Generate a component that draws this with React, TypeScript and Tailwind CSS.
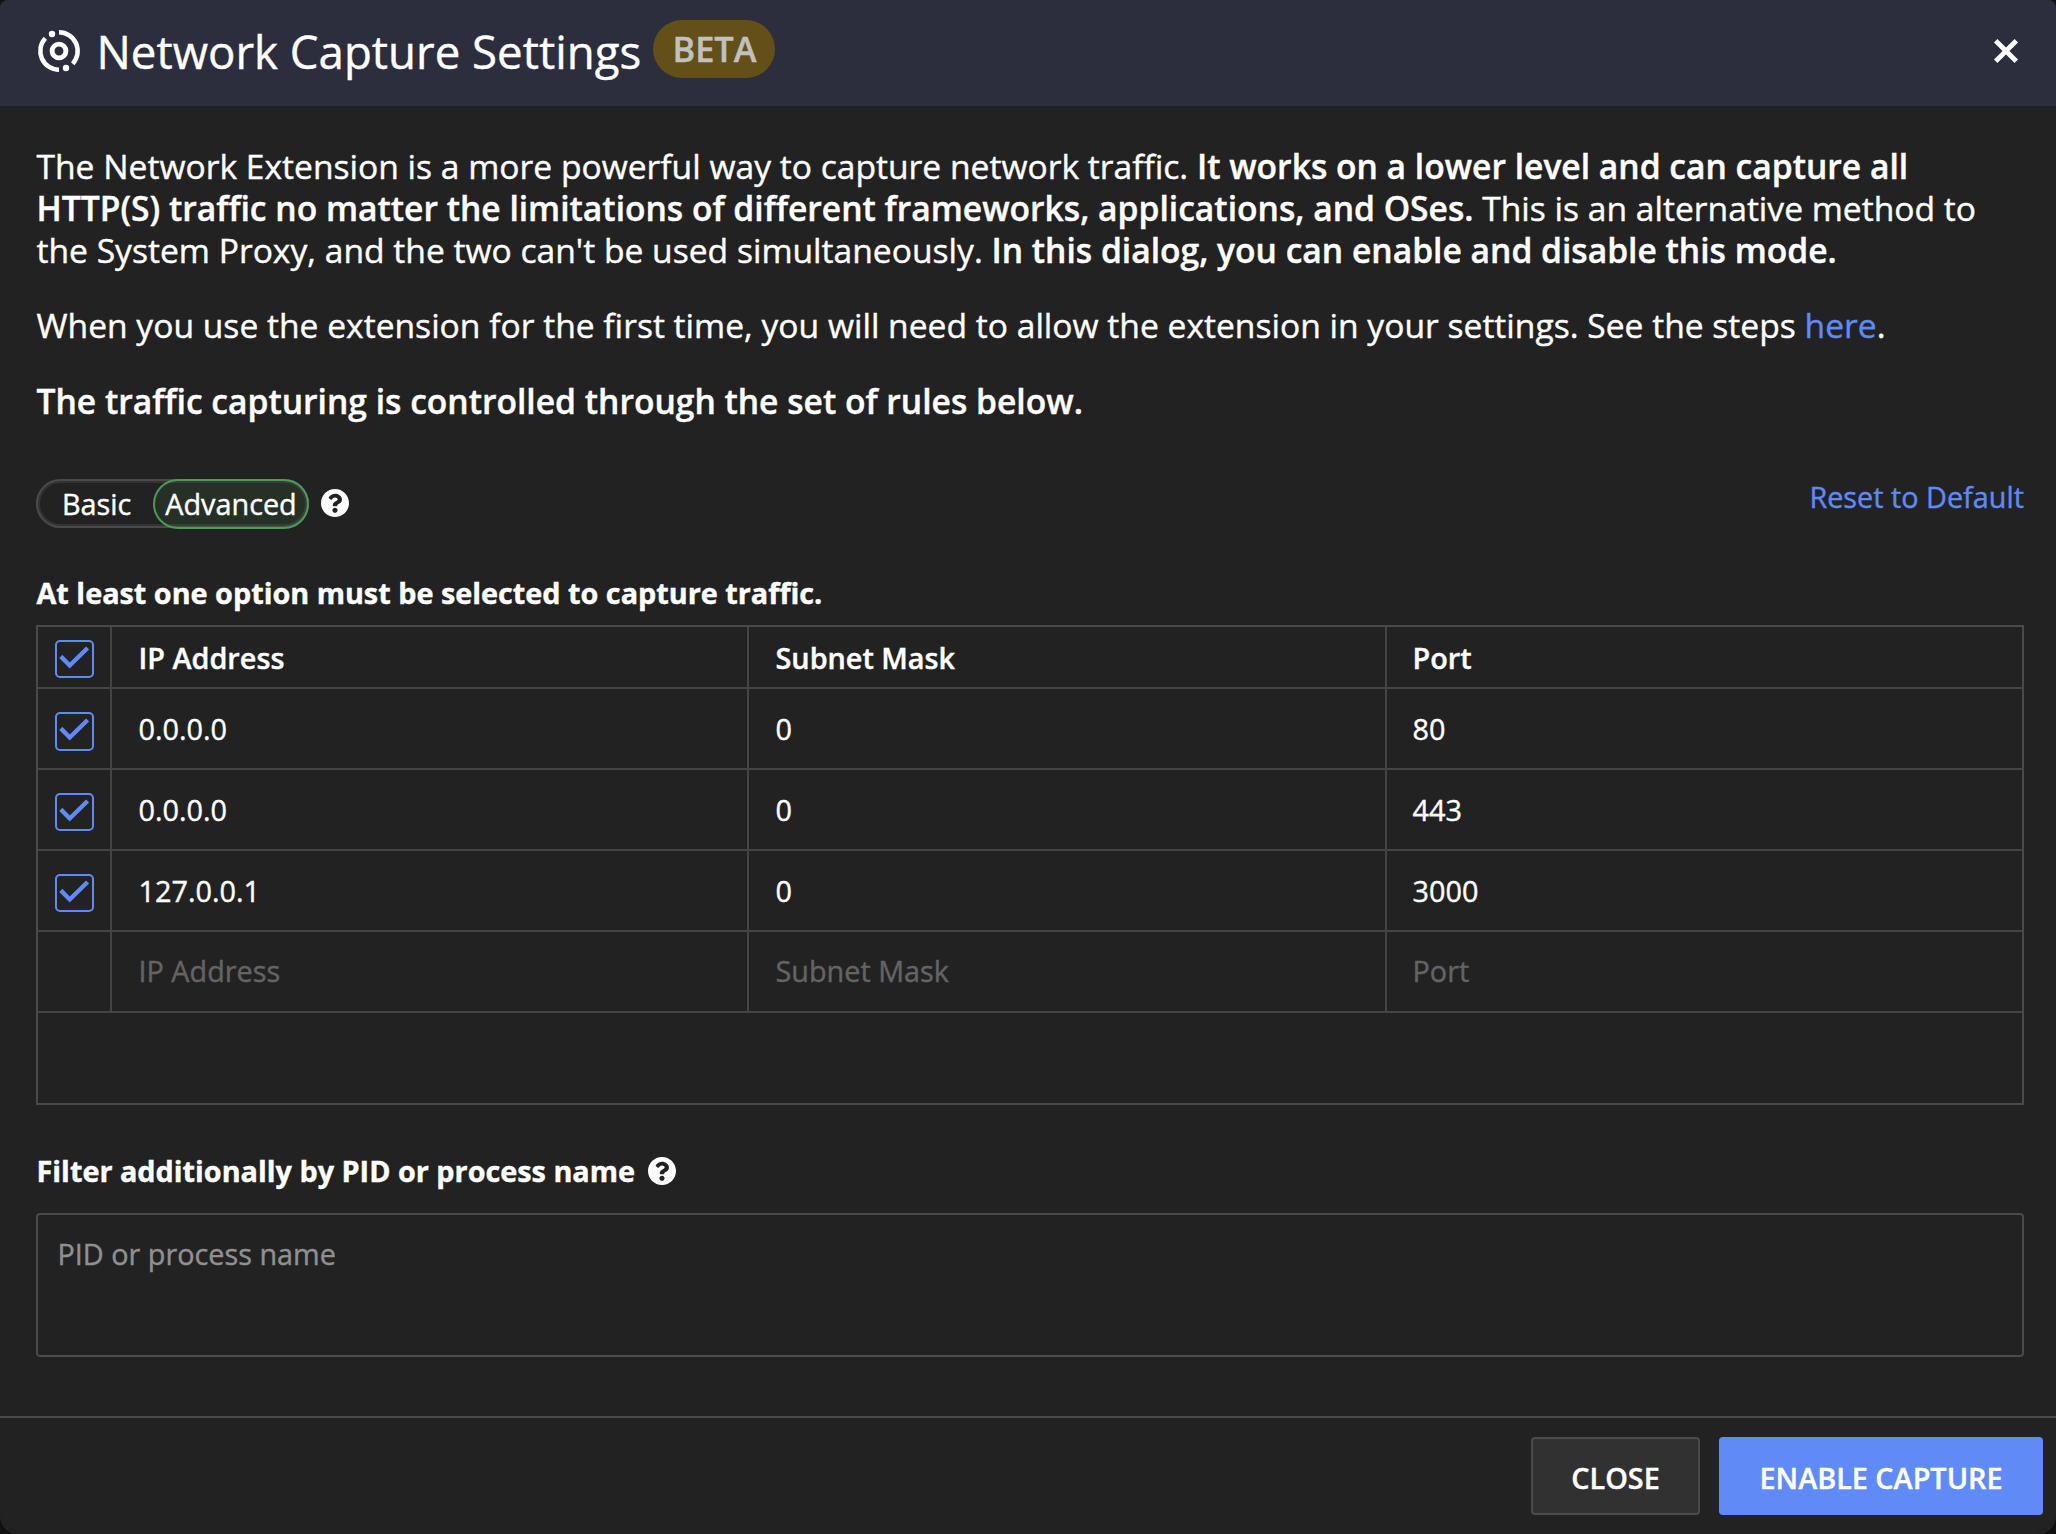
import React from "react";

const rules = [
  ["0.0.0.0", "0", "80"],
  ["0.0.0.0", "0", "443"],
  ["127.0.0.1", "0", "3000"],
];

function CaptureIcon() {
  return (
    <svg className="h-[44px] w-[44px] shrink-0" viewBox="-22 -22 44 44" fill="none" stroke="#fff" strokeWidth="4.5">
      <circle r="6.9" strokeWidth="4.9" />
      <path d="M0 -18.7A18.7 18.7 0 0 1 13.7 12.7" />
      <path d="M0 18.7A18.7 18.7 0 0 1 -13.7 -12.7" />
      <circle cx="-7" cy="-17" r="3.2" fill="#fff" stroke="none" />
      <circle cx="7" cy="17" r="3.2" fill="#fff" stroke="none" />
    </svg>
  );
}

function CloseIcon() {
  return (
    <svg className="h-[28px] w-[28px]" viewBox="-14 -14 28 28" stroke="#fff" strokeWidth="4.8">
      <path d="M-10.3 -10.3L10.3 10.3M10.3 -10.3L-10.3 10.3" />
    </svg>
  );
}

function HelpIcon() {
  return (
    <svg className="h-[28px] w-[28px] shrink-0" viewBox="8 8 496 496" fill="#fff">
      <path d="M504 256c0 136.997-111.043 248-248 248S8 392.997 8 256C8 119.083 119.043 8 256 8s248 111.083 248 248zM262.655 90c-54.497 0-89.255 22.957-116.549 63.758-3.536 5.286-2.353 12.415 2.715 16.258l34.699 26.31c5.205 3.947 12.621 3.008 16.665-2.122 17.864-22.658 30.113-35.797 57.303-35.797 20.429 0 45.698 13.148 45.698 32.958 0 14.976-12.363 22.667-32.534 33.976C247.128 238.528 216 254.941 216 296v4c0 6.627 5.373 12 12 12h56c6.627 0 12-5.373 12-12v-1.333c0-28.462 83.186-29.647 83.186-106.667 0-58.002-60.165-102-116.531-102zM256 338c-25.365 0-46 20.635-46 46 0 25.364 20.635 46 46 46s46-20.636 46-46c0-25.365-20.635-46-46-46z" />
    </svg>
  );
}

function Checkbox({ className }: { className: string }) {
  return (
    <span className={`block w-[39px] rounded-[5px] border-2 border-[#5f8af7] ${className}`}>
      <svg className="block h-[35px] w-[35px]" viewBox="2 2 35 35" fill="none" stroke="#5f8af7" strokeWidth="4.4">
        <path d="M5.8 16.4L14.7 25.5L32.6 8" />
      </svg>
    </span>
  );
}

const grid = "grid grid-cols-[74px_637px_638px_635px] border-b-2 border-[#444]";
const checkCell = "border-r-2 border-[#444] pl-[17px]";
const cell = "flex items-center border-r-2 border-[#444] pl-[26.5px]";
const lastCell = "flex items-center pl-[25.5px]";

export default function App() {
  return (
    <div className="h-[1534px] w-[2056px] bg-[#111]">
      <div className="flex h-full flex-col overflow-hidden rounded-t-[8px] rounded-b-[18px] bg-[#222] text-[28.8px] leading-[40px] text-white [-webkit-text-stroke:0.4px] [font-family:'Open_Sans',sans-serif]">
        <header className="flex h-[106px] shrink-0 items-center bg-[#2c2e3d] pr-[36px] pb-[4px] pl-[37px]">
          <CaptureIcon />
          <h1 className="ml-[15.5px] w-[546px] text-[45.6px] leading-[62px] whitespace-nowrap">Network Capture Settings</h1>
          <span className="-mt-[4px] ml-[10.5px] flex h-[58px] w-[122px] items-center justify-center rounded-full bg-[#635019] pl-px text-[34.4px] font-semibold text-[#c1c1c1]">
            BETA
          </span>
          <button className="ml-auto">
            <CloseIcon />
          </button>
        </header>

        <main className="flex flex-1 flex-col pt-[39px] pr-[32px] pl-[36px]">
          <div className="flex flex-col pl-[0.5px] text-[33.62px] leading-[42px] whitespace-nowrap">
            <p>
              The Network Extension is a more powerful way to capture network traffic.{" "}
              <strong className="font-semibold">
                It works on a lower level and can capture all
                <br />
                HTTP(S) traffic no matter the limitations of different frameworks, applications, and OSes.
              </strong>{" "}
              This is an alternative method to
              <br />
              the System Proxy, and the two can't be used simultaneously.{" "}
              <strong className="font-semibold">In this dialog, you can enable and disable this mode.</strong>
            </p>
            <p className="mt-[33px]">
              When you use the extension for the first time, you will need to allow the extension in your settings. See the
              steps <a className="text-[#5f8af7]">here</a>.
            </p>
            <p className="mt-[34px] font-semibold">The traffic capturing is controlled through the set of rules below.</p>
          </div>

          <div className="mt-[55px] flex h-[52px] items-start justify-between">
            <div className="flex items-start pt-[2px]">
              <div className="flex h-[49px] w-[273px] rounded-full shadow-[inset_0_0_0_2px_#4a4a4a,inset_0_0_0_4px_#333]">
                <button className="w-[117px] pl-[26px] text-left leading-[49px]">Basic</button>
                <button className="h-[50px] w-[156px] shrink-0 rounded-full border-2 border-[#4b9a56] bg-[#4caf50]/10 pb-px text-center leading-[44px]">
                  Advanced
                </button>
              </div>
              <span className="mt-[10px] ml-[12px]">
                <HelpIcon />
              </span>
            </div>
            <a className="text-[#5f8af7]">Reset to Default</a>
          </div>

          <p className="mt-[44px] pl-[0.5px] font-bold">At least one option must be selected to capture traffic.</p>

          <section className="mt-[12px] h-[480px] w-[1988px] border-2 border-[#4a4a4a]">
            <div className={`${grid} h-[62px] font-semibold`}>
              <div className={checkCell}>
                <Checkbox className="mt-[13px] h-[38px]" />
              </div>
              <div className={`${cell} pt-[2px]`}>IP Address</div>
              <div className={`${cell} pt-[2px]`}>Subnet Mask</div>
              <div className={`${lastCell} pt-[2px]`}>Port</div>
            </div>
            {rules.map(([ip, mask, port], i) => (
              <div key={i} className={`${grid} h-[81px]`}>
                <div className={checkCell}>
                  <Checkbox className={i === 0 ? "mt-[23px] h-[39px]" : "mt-[23px] h-[38px]"} />
                </div>
                <div className={cell}>{ip}</div>
                <div className={cell}>{mask}</div>
                <div className={lastCell}>{port}</div>
              </div>
            ))}
            <div className={`${grid} h-[81px] text-[#646464]`}>
              <div className={checkCell} />
              <div className={`${cell} pb-[2px]`}>IP Address</div>
              <div className={`${cell} pb-[2px]`}>Subnet Mask</div>
              <div className={`${lastCell} pb-[2px]`}>Port</div>
            </div>
          </section>

          <div className="mt-[46px] flex h-[39px] items-center gap-[12.5px] pl-[0.5px] leading-[39px] font-bold">
            <span>Filter additionally by PID or process name</span>
            <HelpIcon />
          </div>
          <div className="mt-[23px] h-[144px] w-[1988px] rounded-[4px] border-2 border-[#4a4a4a] pt-[19px] pl-[19.5px] text-[#909090]">
            PID or process name
          </div>
        </main>

        <footer className="flex h-[118px] shrink-0 items-start justify-end gap-[19px] border-t-2 border-[#4a4a4a] pt-[19px] pr-[13px] font-semibold">
          <button className="h-[78px] w-[169px] rounded-[4px] border-2 border-[#4a4a4a] bg-[#313131] pt-[3px]">CLOSE</button>
          <button className="h-[78px] w-[324px] rounded-[4px] bg-[#608bf7] pt-[3px]">ENABLE CAPTURE</button>
        </footer>
      </div>
    </div>
  );
}
